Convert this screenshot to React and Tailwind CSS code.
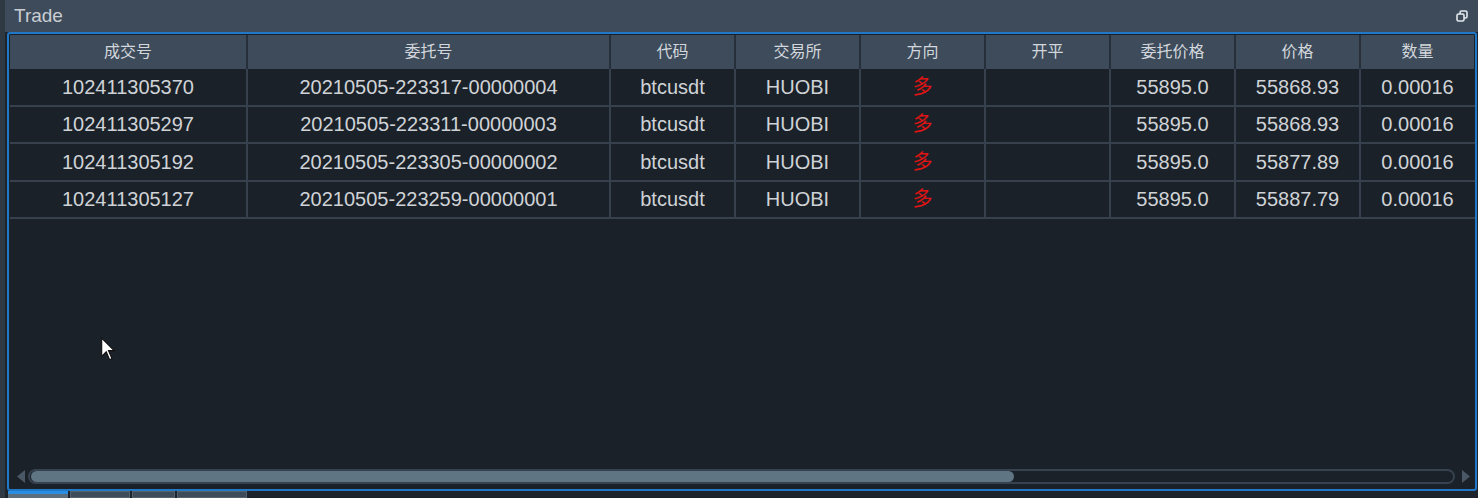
import React from "react";

const cols = [
  { label: "成交号", w: "w-[238px]" },
  { label: "委托号", w: "w-[363px]" },
  { label: "代码", w: "w-[125px]" },
  { label: "交易所", w: "w-[125px]" },
  { label: "方向", w: "w-[125px]" },
  { label: "开平", w: "w-[125px]" },
  { label: "委托价格", w: "w-[125px]" },
  { label: "价格", w: "w-[125px]" },
  { label: "数量", w: "w-[113px]" },
];

const rows = [
  ["102411305370", "20210505-223317-00000004", "btcusdt", "HUOBI", "多", "", "55895.0", "55868.93", "0.00016"],
  ["102411305297", "20210505-223311-00000003", "btcusdt", "HUOBI", "多", "", "55895.0", "55868.93", "0.00016"],
  ["102411305192", "20210505-223305-00000002", "btcusdt", "HUOBI", "多", "", "55895.0", "55877.89", "0.00016"],
  ["102411305127", "20210505-223259-00000001", "btcusdt", "HUOBI", "多", "", "55895.0", "55887.79", "0.00016"],
];

const font = { fontFamily: '"Liberation Sans", "Noto Sans CJK SC", sans-serif' };

function RestoreIcon() {
  return (
    <svg width="12" height="12" viewBox="0 0 12 12" fill="none" stroke="#e4e8ec" strokeWidth="1.6">
      <rect x="4" y="1" width="7" height="7" rx="1.5" />
      <rect x="1" y="4" width="7" height="7" rx="1.5" fill="#3e4b5a" />
    </svg>
  );
}

export default function App() {
  return (
    <div className="relative flex h-[498px] w-[1478px] overflow-hidden bg-[#1d242b]" style={font}>
      {/* left strip */}
      <div className="w-[5px] shrink-0 bg-[#2f3944]" />

      <div className="flex flex-1 flex-col">
        {/* title bar */}
        <div className="flex h-[32px] shrink-0 items-center justify-between bg-[#3e4b5a] pl-[9px] pr-[10px]">
          <span className="text-[19px] text-[#c9ced4]">Trade</span>
          <RestoreIcon />
        </div>

        {/* table panel */}
        <div className="ml-[2px] mr-[1px] flex h-[459px] flex-col rounded-[3px] border-2 border-[#1f78c8] bg-[#1b2128] pl-px pt-px">
          {/* header */}
          <div className="flex h-[34px] shrink-0">
            {cols.map((c, i) => (
              <div
                key={c.label}
                className={`${c.w} flex shrink-0 items-center justify-center bg-[#3d4b5b] text-[16px] text-[#d3d7db] ${
                  i < cols.length - 1 ? "border-r-2 border-[#27303a]" : ""
                }`}
              >
                {c.label}
              </div>
            ))}
          </div>

          {/* rows */}
          <div className="flex-1">
            {rows.map((r, ri) => (
              <div key={ri} className="flex h-[37.5px] border-b-2 border-[#36414d]">
                {r.map((cell, ci) => (
                  <div
                    key={ci}
                    className={`${cols[ci].w} flex shrink-0 items-center justify-center text-[20px] ${
                      ci === 4 ? "text-[#e01414]" : "text-[#cfd3d7]"
                    } ${ci < cols.length - 1 ? "border-r-2 border-[#36414d]" : ""}`}
                  >
                    {cell}
                  </div>
                ))}
              </div>
            ))}
          </div>

          {/* horizontal scrollbar */}
          <div className="mb-[5px] flex h-[16px] shrink-0 items-center pl-[7px] pr-[5px]">
            <svg width="8" height="13" viewBox="0 0 8 13" className="shrink-0">
              <polygon points="8,0 8,13 0,6.5" fill="#4a5866" />
            </svg>
            <div className="ml-[3px] flex h-[15px] flex-1 items-center rounded-full border-2 border-[#36424f] px-px">
              <div className="h-[11px] w-[983px] rounded-full bg-[#607584]" />
            </div>
            <svg width="8" height="13" viewBox="0 0 8 13" className="ml-[7px] shrink-0">
              <polygon points="0,0 0,13 8,6.5" fill="#4a5866" />
            </svg>
          </div>
        </div>

        {/* bottom tabs */}
        <div className="ml-[3px] flex h-[7px] gap-[2px]">
          <div className="flex w-[60px] flex-col">
            <div className="h-[3px] bg-[#2b8ee2]" />
            <div className="flex-1 bg-[#5d6f7d]" />
          </div>
          <div className="w-[60px] border border-[#55636f] bg-[#3e4b58]" />
          <div className="w-[43px] border border-[#55636f] bg-[#3e4b58]" />
          <div className="w-[70px] border border-[#55636f] bg-[#3e4b58]" />
        </div>
      </div>

      {/* mouse cursor */}
      <svg className="absolute left-[100px] top-[337px]" width="17" height="25" viewBox="0 0 14 22">
        <path d="M1 1 L1 17 L5 13 L8 20 L10 19 L7 12 L12 12 Z" fill="#ffffff" stroke="#111" strokeWidth="1" />
      </svg>
    </div>
  );
}
